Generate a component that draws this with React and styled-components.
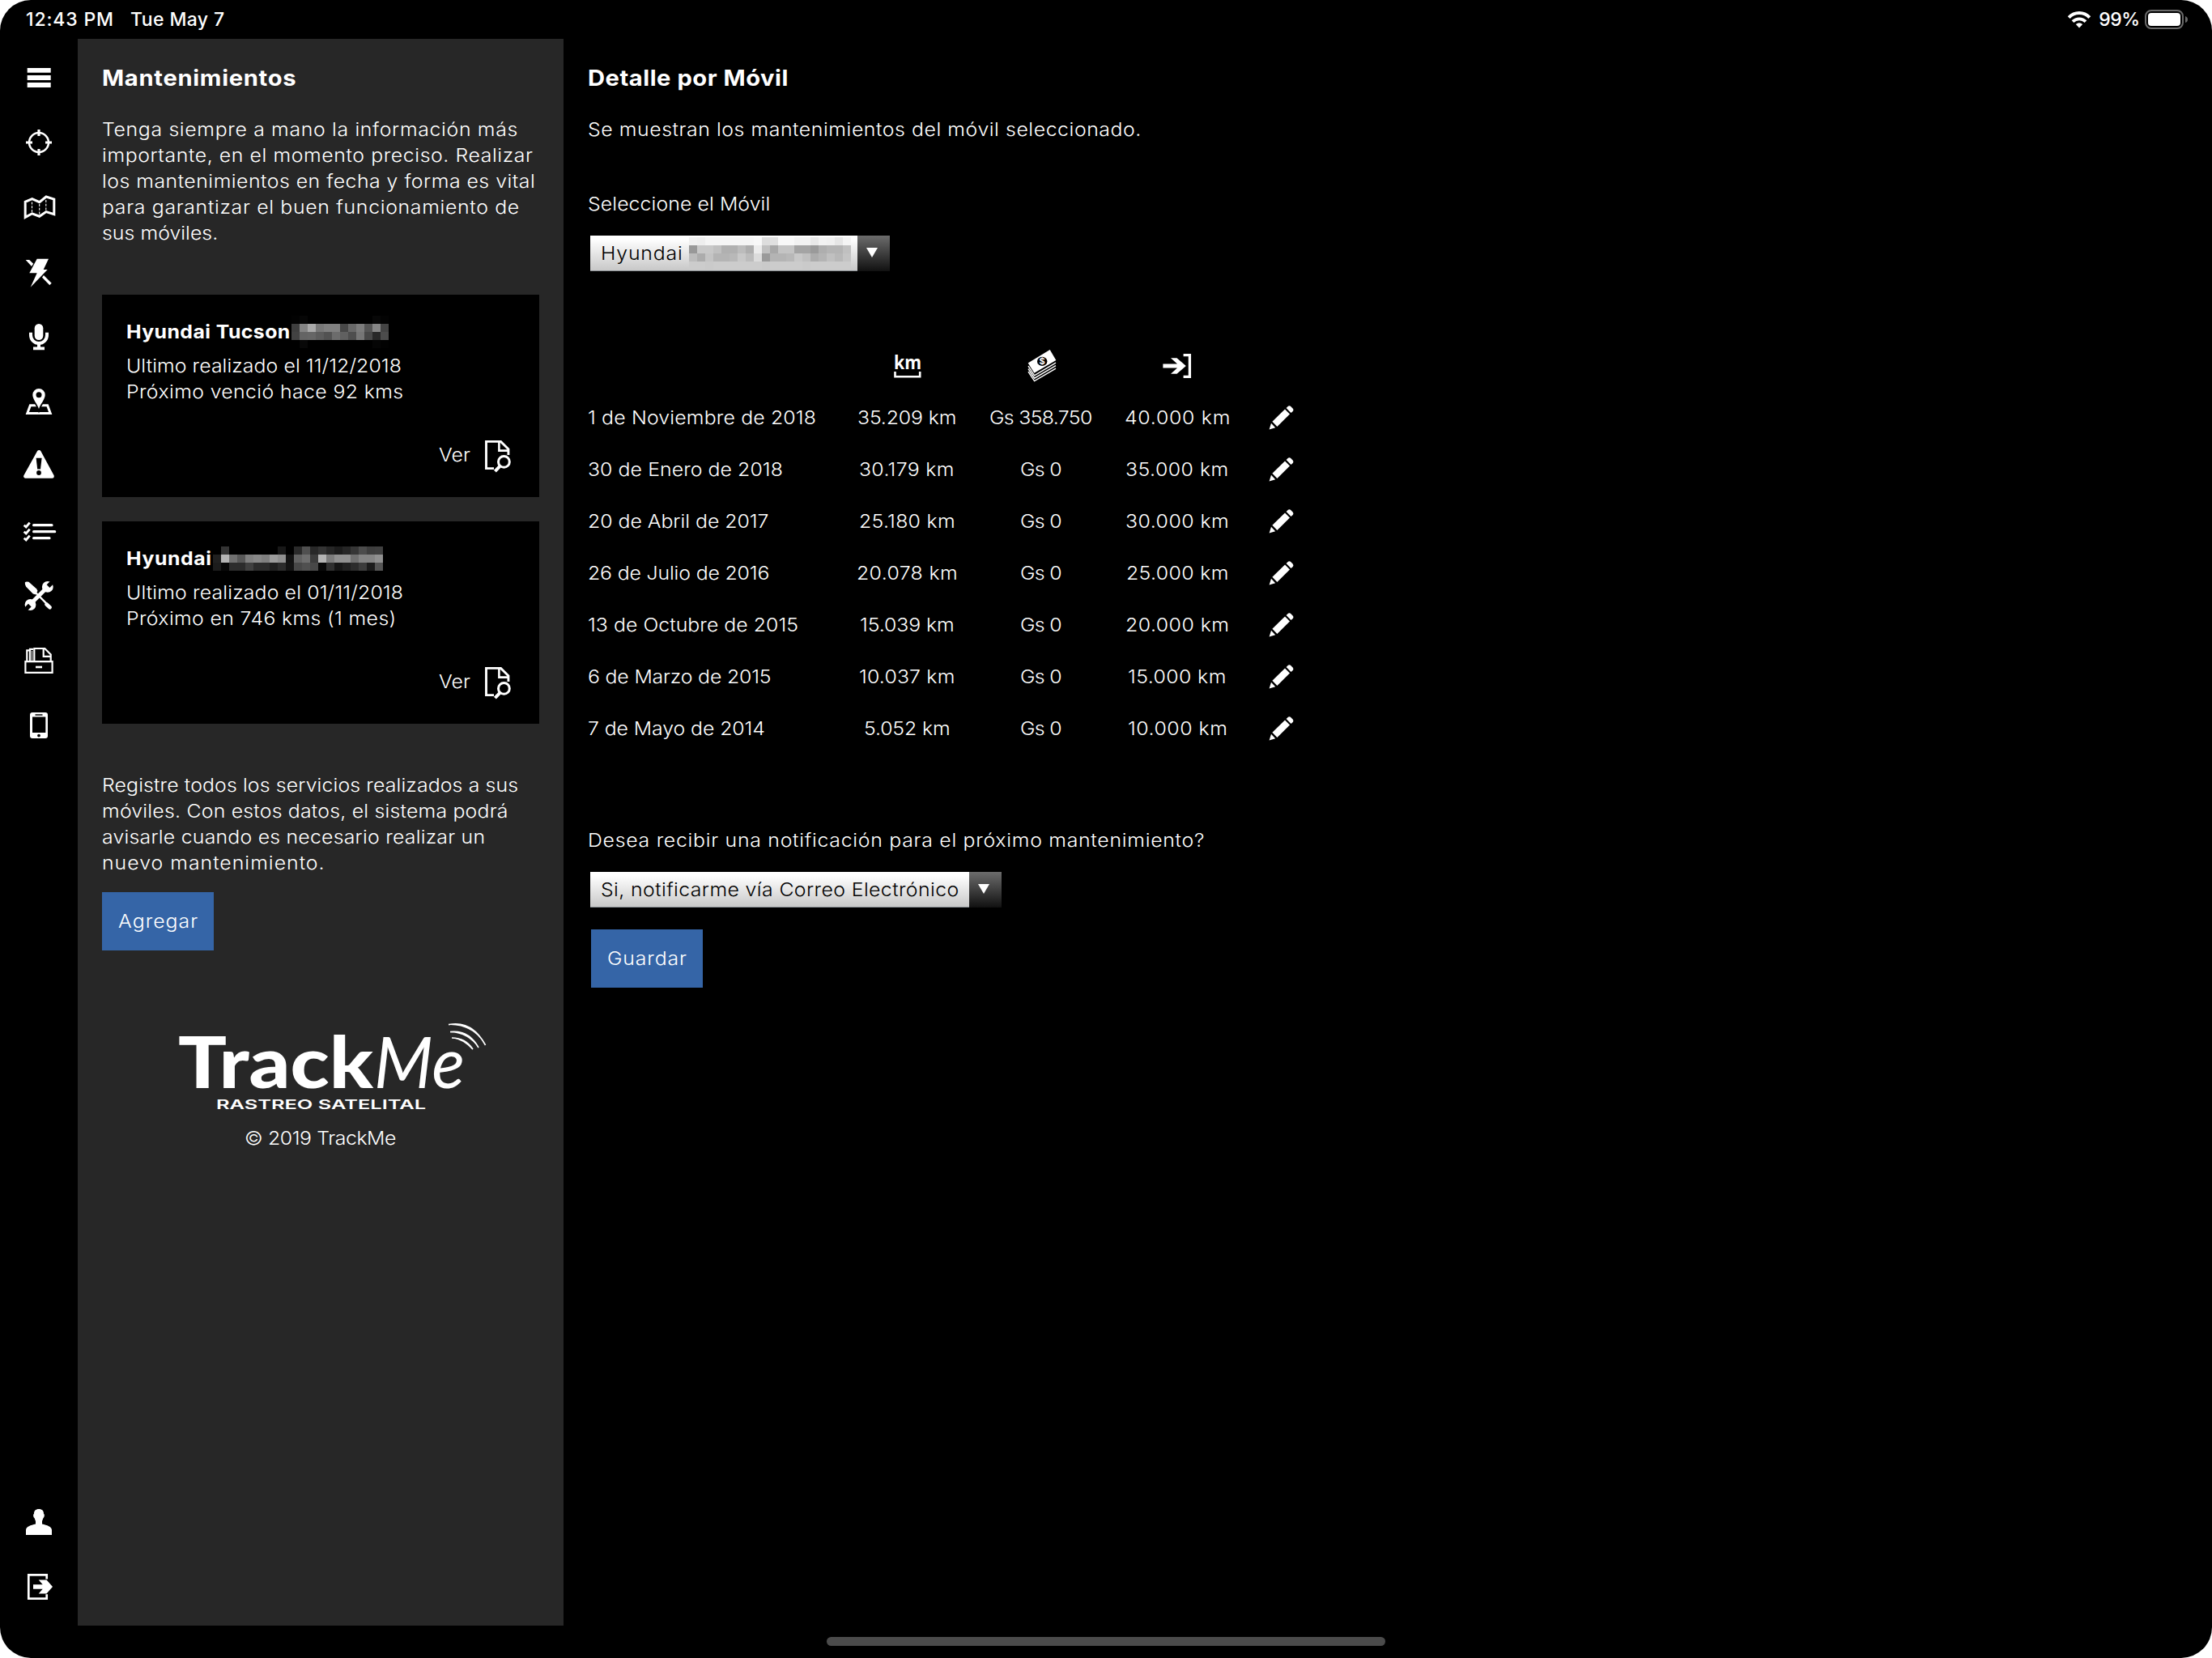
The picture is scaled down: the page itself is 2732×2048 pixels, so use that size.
import React, { useLayoutEffect, useRef, useState } from "react";
import styled, { createGlobalStyle } from "styled-components";

const STRETCH = 1.08;

const services = [
  { date: "1 de Noviembre de 2018", km: "35.209 km", cost: "Gs 358.750", next: "40.000 km", w: [281, 121, 126, 129] },
  { date: "30 de Enero de 2018", km: "30.179 km", cost: "Gs 0", next: "35.000 km", w: [240, 116, 51, 126] },
  { date: "20 de Abril de 2017", km: "25.180 km", cost: "Gs 0", next: "30.000 km", w: [222, 118, 51, 127] },
  { date: "26 de Julio de 2016", km: "20.078 km", cost: "Gs 0", next: "25.000 km", w: [223, 124, 51, 125] },
  { date: "13 de Octubre de 2015", km: "15.039 km", cost: "Gs 0", next: "20.000 km", w: [259, 116, 51, 127] },
  { date: "6 de Marzo de 2015", km: "10.037 km", cost: "Gs 0", next: "15.000 km", w: [225, 117, 51, 120] },
  { date: "7 de Mayo de 2014", km: "5.052 km", cost: "Gs 0", next: "10.000 km", w: [218, 106, 51, 122] },
];

const intro = [
  ["Tenga siempre a mano la información más", 512],
  ["importante, en el momento preciso. Realizar", 531],
  ["los mantenimientos en fecha y forma es vital", 534],
  ["para garantizar el buen funcionamiento de", 514],
  ["sus móviles.", 142],
];

const registerText = [
  ["Registre todos los servicios realizados a sus", 513],
  ["móviles. Con estos datos, el sistema podrá", 500],
  ["avisarle cuando es necesario realizar un", 472],
  ["nuevo mantenimiento.", 274],
];

// gray level of every cell, as hex pairs
const plateTucson = [
  "020600000000000000000703",
  "3e84a978808048687c558644",
  "4264665c526c604e7648284c",
  "000800000000000000000502",
];

const plateHyundai = [
  "003400000000000018002a502834261c26364c3e40",
  "20b470588088809c9012626e3cb47c909070848490",
  "1c082c2c402c2c202c14485048083016202c3c1c54",
];

const plateSelect = [
  "f0eef5f5f5f5f5f5f8dde0f8f8f2f2e8f2f0e6f4",
  "98c8c8c0b0b0bcaeecc0a8c4c4a4a49aaeb4b4c0",
  "bcacc4b4b4b8c8bcdc9ab4b4b8c8c0acb4c0b8c4",
  "cccccacccccccccccccacccccccccacccccccccc",
];

// Stretches a line of text a little, then tracks it until it has the given width
const Fit = ({ w, stretch = STRETCH, children }) => {
  const ref = useRef(null);
  const [spacing, setSpacing] = useState(0);

  useLayoutEffect(() => {
    const natural = ref.current.offsetWidth;
    setSpacing(((w + 1) / stretch - natural) / (children.length - 1));
  }, []);

  return (
    <FitText
      ref={ref}
      $stretch={stretch}
      style={{ letterSpacing: spacing, marginRight: (w + 1) * (1 - 1 / stretch) - spacing }}
    >
      {children}
    </FitText>
  );
};

const Paragraph = ({ lines }) => (
  <Text>
    {lines.map(([line, w]) => (
      <TextLine key={line}>
        <Fit w={w}>{line}</Fit>
      </TextLine>
    ))}
  </Text>
);

const Mosaic = ({ rows }) => (
  <MosaicGrid $cols={rows[0].length / 2}>
    {rows.map((row, y) =>
      row.match(/../g).map((c, x) => <MosaicCell key={`${y}-${x}`} $color={`#${c}${c}${c}`} />)
    )}
  </MosaicGrid>
);

const VehicleCard = ({ name, nameWidth, plate, lines }) => (
  <Card>
    <CardTitle>
      <Fit w={nameWidth}>{name}</Fit>
      <Mosaic rows={plate} />
    </CardTitle>
    <Paragraph lines={lines} />
    <CardAction>
      <CardActionLabel>
        <Fit w={38}>Ver</Fit>
      </CardActionLabel>
      <ViewIcon />
    </CardAction>
  </Card>
);

const Select = ({ width, children }) => (
  <SelectBox>
    <SelectValue $width={width}>{children}</SelectValue>
    <SelectArrow>
      <svg width="14" height="12" viewBox="0 0 14 12">
        <path d="M0 0h14L7 12z" fill="#fff" />
      </svg>
    </SelectArrow>
  </SelectBox>
);

const NavIcon = ({ children }) => (
  <NavItem>
    <svg width="48" height="48" viewBox="0 0 48 48" fill="#fff">
      {children}
    </svg>
  </NavItem>
);

const ViewIcon = () => (
  <svg width="34" height="40" viewBox="0 0 34 40" fill="none" stroke="#fff">
    <path d="M12 34.6H2.5V1.4H20.5L29.9 10.8V18" strokeWidth="2.9" />
    <path d="M18.4 1.4V12.6H30" strokeWidth="2.6" />
    <circle cx="24.4" cy="26.4" r="6.9" strokeWidth="3" />
    <path d="M19.4 31.8L13.4 38.2" strokeWidth="4" />
  </svg>
);

const PencilIcon = () => (
  <svg width="32" height="30" viewBox="0 0 32 30" fill="#fff">
    <path d="M0.6 29.4L3 21.8L8.2 27.2z" />
    <path d="M4.4 19.8L20 4.4L26 10.6L10.4 26z" />
    <path d="M21.6 2.9L23.6 1Q25.4-0.6 27.2 1L29.6 3.4Q31.2 5.2 29.8 6.9L27.5 9.1z" />
  </svg>
);

const MoneyIcon = () => (
  <svg width="36" height="40" viewBox="-1 0 36 40">
    <path d="M27.7 0L35.3 13L8.4 28.8L0.7 16.4z" fill="#fff" />
    <ellipse cx="18.2" cy="14.4" rx="6.2" ry="5.6" fill="#000" />
    <MoneySign x="18.2" y="18.4">$</MoneySign>
    <g fill="none" stroke="#fff" strokeWidth="1.4">
      <path d="M1 20.2L8.6 31.8L35 16.2" />
      <path d="M1 23.7L8.6 35.2L35 19.7" />
      <path d="M1 27.2L8.6 38.6L35 23.2" />
    </g>
  </svg>
);

const Logo = () => (
  <LogoSvg width="384" height="112" viewBox="0 0 384 112">
    <LogoTrack x="-2" y="82" textLength="241" lengthAdjust="spacingAndGlyphs">Track</LogoTrack>
    <LogoMe x="240" y="82" textLength="112" lengthAdjust="spacingAndGlyphs">Me</LogoMe>
    <LogoTag x="45" y="107.5" textLength="259" lengthAdjust="spacingAndGlyphs">RASTREO SATELITAL</LogoTag>
    <path d="M332 4Q360-3 378 30Q362 3 332 4z" />
    <path d="M334 13Q358 9 369.5 33Q356 14 334 13z" />
    <path d="M336 20Q353 19 362 35Q350 22 336 20z" />
    <g fill="none" stroke="#fff" strokeWidth="1.6">
      <path d="M332 3.6Q361-2 377.6 29" />
      <path d="M334 12.6Q357 10 369 32" />
      <path d="M336 20Q353 20 362 34" />
    </g>
  </LogoSvg>
);

export default function App() {
  return (
    <Screen>
      <GlobalStyle />
      <StatusBar>
        <StatusGroup $gap={21}>
          <Fit w={107} stretch={1}>12:43 PM</Fit>
          <Fit w={115} stretch={1}>Tue May 7</Fit>
        </StatusGroup>
        <StatusGroup $gap={6}>
          <svg width="33" height="22" viewBox="0 0 33 22" fill="none" stroke="#fff" strokeWidth="4">
            <path d="M2.2 8.6A17.5 17.5 0 0 1 27.8 8.6" />
            <path d="M7 13.6A11.4 11.4 0 0 1 23 13.6" strokeWidth="3.8" />
            <path d="M15 21.5L10.8 17A6.5 6.5 0 0 1 19.2 17z" fill="#fff" stroke="none" />
          </svg>
          <Fit w={50} stretch={1}>99%</Fit>
          <svg width="54" height="24" viewBox="0 0 54 24">
            <rect x="1" y="1" width="46" height="22" rx="7" fill="none" stroke="#6a6a6a" strokeWidth="2" />
            <rect x="4" y="4" width="40" height="16" rx="4" fill="#fff" />
            <path d="M50 8Q53 9 53 12Q53 15 50 16z" fill="#6a6a6a" />
          </svg>
        </StatusGroup>
      </StatusBar>

      <Body>
        <Nav>
          <NavGroup>
            <NavIcon>
              <path d="M9.7 12h29v5.8h-29zM9.7 21h29v5.9h-29zM9.7 30h29v5.9h-29z" />
            </NavIcon>
            <NavIcon>
              <circle cx="24" cy="24" r="12" fill="none" stroke="#fff" strokeWidth="2.5" />
              <path d="M22.4 8h3.2v8h-3.2zM22.4 32h3.2v8h-3.2zM8 22.4h8v3.2h-8zM32 22.4h8v3.2h-8z" />
            </NavIcon>
            <NavIcon>
              <g fill="none" stroke="#fff">
                <path
                  d="M7.2 36.4V17.3L15.7 13.7L24.7 17.7L33 11L42.8 14V32.6L33 29.6L24.7 35.2L15.7 31.8z"
                  strokeWidth="3"
                />
                <path d="M15.5 17.5V30M24.7 20V34M32.8 15V28" strokeWidth="1.1" strokeDasharray="3 1.8" />
              </g>
            </NavIcon>
            <NavIcon>
              <path d="M21.7 7.7H36L29.7 21H34.7L13.7 42.7L21.7 25.3H12.3z" />
              <path d="M7.7 9H12.2L17.2 13.8L15 16.9zM30 28L39.7 37.7L37.3 40.2L28 30.7z" />
            </NavIcon>
            <NavIcon>
              <rect x="18.7" y="8" width="10.6" height="20" rx="5.3" />
              <path d="M14 18.7V22a10 10 0 0 0 20 0V18.7" fill="none" stroke="#fff" strokeWidth="4" />
              <path d="M22 33h4v3.5h5v3.7H17v-3.7h5z" />
            </NavIcon>
            <NavIcon>
              <path d="M13.4 28.7H34.6L38.2 38.5H9.8z" fill="none" stroke="#fff" strokeWidth="3" />
              <path
                d="M24 33C22 27 16.3 21 16.3 15.7a7.7 7.7 0 0 1 15.4 0C31.7 21 26 27 24 33z"
                stroke="#000"
                strokeWidth="3.5"
                paintOrder="stroke"
              />
              <circle cx="24" cy="15.7" r="3.5" fill="#000" />
            </NavIcon>
            <NavIcon>
              <path d="M24.2 6.5L7.7 36.2H40.3z" stroke="#fff" strokeWidth="5" strokeLinejoin="round" />
              <path d="M20.6 13.7h7L26 27.6h-3.8z" fill="#000" />
              <circle cx="24" cy="32" r="2.9" fill="#000" />
            </NavIcon>
            <NavIcon>
              <g fill="none" stroke="#fff" strokeLinecap="round">
                <path d="M17.6 16.7H40M17.6 24.7H43.7M17.6 32.7H37" strokeWidth="3.2" />
                <path
                  d="M5.7 16.7L8.2 19L12.7 13.6M5.7 24.7L8.2 27L12.7 21.6M5.7 32.7L8.2 35L12.7 29.6"
                  strokeWidth="2.9"
                  strokeLinecap="butt"
                />
              </g>
            </NavIcon>
            <NavIcon>
              <path d="M14.5 33.2L33 14.7" stroke="#fff" strokeWidth="5" />
              <circle cx="34.8" cy="12.9" r="6.9" />
              <circle cx="13.5" cy="35" r="6.9" />
              <path d="M35.5 12.2L43 4.7M12.8 35.7L5 43.5" stroke="#000" strokeWidth="5.2" />
              <path d="M6.8 7.5Q8 5.7 11.5 6.8L21 15.2L22.5 17.8L20.2 22.4L16.8 21.6L8.2 12.7Q6.5 10 6.8 7.5z" />
              <path d="M19 19L36 36.2" stroke="#fff" strokeWidth="2.4" />
              <path d="M33.5 34.5L37.6 38.2" stroke="#fff" strokeWidth="4.6" strokeLinecap="round" />
            </NavIcon>
            <NavIcon>
              <g fill="none" stroke="#fff" strokeWidth="2.2">
                <path d="M7.4 25.1H40.6V38.9H7.4z" />
                <path d="M20 32H28" strokeWidth="2.6" />
                <path d="M9.3 24V11.3H12.8M13 24V9.9H17M18.3 24V9H31.3L38.7 16.4V24" />
                <path d="M29.7 9V18.8H38.5" />
                <path d="M15.6 12V24" strokeWidth="1" />
              </g>
            </NavIcon>
            <NavIcon>
              <rect x="13" y="8" width="22" height="32" rx="3" />
              <path d="M16 13.4h16.3v19.6H16zM19.5 10.2h9v1.6h-9z" fill="#000" />
              <circle cx="24" cy="36.6" r="1.9" fill="#000" />
            </NavIcon>
          </NavGroup>
          <NavGroup>
            <NavIcon>
              <path d="M24 8C28 8 30.2 10.2 30 14C31.5 14.5 30.8 18.5 29.5 19C29 21 28 22 28 23.5V26.5C34 28 40 29.5 40 34V40H8V34C8 29.5 14 28 20 26.5V23.5C20 22 19 21 18.5 19C17.2 18.5 16.5 14.5 18 14C17.8 10.2 20 8 24 8z" />
            </NavIcon>
            <NavIcon>
              <path d="M33.7 14.5V9.3H11.3V38.7H33.7V33.3" fill="none" stroke="#fff" strokeWidth="2.7" />
              <path d="M17 21.2H28.7L23.7 15.6H33.5L41 24L33.5 32.4H23.7L28.7 26.8H17z" />
            </NavIcon>
          </NavGroup>
        </Nav>

        <Panel>
          <Heading>
            <Fit w={239}>Mantenimientos</Fit>
          </Heading>
          <Paragraph lines={intro} />
          <Cards>
            <VehicleCard
              name="Hyundai Tucson"
              nameWidth={201}
              plate={plateTucson}
              lines={[
                ["Ultimo realizado el 11/12/2018", 339],
                ["Próximo venció hace 92 kms", 341],
              ]}
            />
            <VehicleCard
              name="Hyundai"
              nameWidth={104}
              plate={plateHyundai}
              lines={[
                ["Ultimo realizado el 01/11/2018", 341],
                ["Próximo en 746 kms (1 mes)", 332],
              ]}
            />
          </Cards>
          <Paragraph lines={registerText} />
          <AddButton>
            <Fit w={97}>Agregar</Fit>
          </AddButton>
          <Logo />
          <Copyright>
            <Fit w={186}>© 2019 TrackMe</Fit>
          </Copyright>
        </Panel>

        <Main>
          <Heading>
            <Fit w={246}>Detalle por Móvil</Fit>
          </Heading>
          <Paragraph lines={[["Se muestran los mantenimientos del móvil seleccionado.", 682]]} />
          <Field $top={60}>
            <Paragraph lines={[["Seleccione el Móvil", 224]]} />
            <Select width={330}>
              <Fit w={100}>Hyundai</Fit>
              <Mosaic rows={plateSelect} />
            </Select>
          </Field>

          <Table>
            <Row>
              <Cell />
              <Cell>
                <svg width="34" height="30" viewBox="-1 0 34 30">
                  <KmText x="0" y="18.5" textLength="34" lengthAdjust="spacingAndGlyphs">km</KmText>
                  <path d="M1.5 22V28.2H32.2V22" fill="none" stroke="#fff" strokeWidth="2.6" />
                </svg>
              </Cell>
              <Cell>
                <MoneyIcon />
              </Cell>
              <Cell>
                <svg width="36" height="30" viewBox="0 0 36 30" fill="#fff">
                  <path d="M0.4 12.5H18L10 5.3H17.5L28.8 15L17.5 24.7H10L18 17.5H0.4z" />
                  <path d="M25.6 1.7H33.4V28.3H25.6" fill="none" stroke="#fff" strokeWidth="3.3" />
                </svg>
              </Cell>
              <Cell />
            </Row>
            {services.map((s) => (
              <Row key={s.date}>
                <Cell $left><Fit w={s.w[0]}>{s.date}</Fit></Cell>
                <Cell><Fit w={s.w[1]}>{s.km}</Fit></Cell>
                <Cell><Fit w={s.w[2]}>{s.cost}</Fit></Cell>
                <Cell><Fit w={s.w[3]}>{s.next}</Fit></Cell>
                <Cell><PencilIcon /></Cell>
              </Row>
            ))}
          </Table>

          <Field $top={90}>
            <Paragraph lines={[["Desea recibir una notificación para el próximo mantenimiento?", 760]]} />
            <Select width={468}>
              <Fit w={441}>Si, notificarme vía Correo Electrónico</Fit>
            </Select>
          </Field>
          <SaveButton>
            <Fit w={97}>Guardar</Fit>
          </SaveButton>
        </Main>
      </Body>
      <HomeIndicator />
    </Screen>
  );
}

const GlobalStyle = createGlobalStyle`
  * {
    box-sizing: border-box;
  }

  body {
    margin: 0;
    background: #fff;
  }

  svg {
    display: block;
    flex-shrink: 0;
    overflow: visible;
  }
`;

const Screen = styled.div`
  width: 2732px;
  height: 2048px;
  display: flex;
  flex-direction: column;
  overflow: hidden;
  border-radius: 38px;
  background: #000;
  color: #fff;
  font-family: "Inter", "Liberation Sans", sans-serif;
  font-size: 23px;
  font-weight: 350;
  line-height: 32px;
`;

const StatusBar = styled.div`
  display: flex;
  justify-content: space-between;
  height: 48px;
  padding: 0 29px 0 32px;
  font-weight: 450;
`;

const StatusGroup = styled.div`
  display: flex;
  align-items: center;
  gap: ${(props) => props.$gap}px;
`;

const Body = styled.div`
  display: flex;
  height: 1960px;
`;

const Nav = styled.div`
  width: 96px;
  display: flex;
  flex-direction: column;
  justify-content: space-between;
  padding: 8px 0;
`;

const NavGroup = styled.div`
  display: flex;
  flex-direction: column;
`;

const NavItem = styled.div`
  height: 80px;
  display: flex;
  align-items: center;
  justify-content: center;
`;

const Panel = styled.div`
  width: 600px;
  padding: 32px 30px;
  background: #272727;
`;

const Main = styled.div`
  flex: 1;
  padding: 32px 30px;
`;

const Heading = styled.div`
  margin-bottom: 30px;
  font-size: 27px;
  font-weight: 700;
  line-height: 34px;
`;

const Text = styled.div`
  font-weight: 350;
`;

const TextLine = styled.div`
  height: 32px;
  white-space: nowrap;
`;

const FitText = styled.span`
  display: inline-block;
  white-space: pre;
  transform: scaleX(${(props) => props.$stretch});
  transform-origin: left;
`;

const Cards = styled.div`
  display: flex;
  flex-direction: column;
  gap: 30px;
  margin: 60px 0;
`;

const Card = styled.div`
  height: 250px;
  padding: 30px 34px 30px 30px;
  background: #000;
`;

const CardTitle = styled.div`
  display: flex;
  align-items: center;
  gap: 2px;
  height: 32px;
  margin-bottom: 10px;
  font-weight: 700;
`;

const CardAction = styled.div`
  display: flex;
  justify-content: flex-end;
  gap: 17px;
  margin-top: 44px;
`;

const CardActionLabel = styled.div`
  padding-top: 2px;
`;

const MosaicGrid = styled.div`
  display: grid;
  grid-template-columns: repeat(${(props) => props.$cols}, 10px);
  grid-auto-rows: 10px;
`;

const MosaicCell = styled.div`
  background: ${(props) => props.$color};
`;

const Button = styled.div`
  width: 138px;
  height: 72px;
  display: flex;
  align-items: center;
  justify-content: center;
  background: #3565a7;
`;

const AddButton = styled(Button)`
  margin-top: 20px;
`;

const SaveButton = styled(Button)`
  margin: 27px 0 0 4px;
`;

const LogoSvg = styled.svg`
  margin: 88px 0 0 96px;
  fill: #fff;
`;

const LogoTrack = styled.text`
  font-family: "Lato", sans-serif;
  font-size: 88px;
  font-weight: 900;
`;

const LogoMe = styled.text`
  font-family: "Lato", sans-serif;
  font-size: 88px;
  font-style: italic;
  font-weight: 400;
`;

const LogoTag = styled.text`
  font-family: "Inter", sans-serif;
  font-size: 16.5px;
  font-weight: 600;
`;

const MoneySign = styled.text`
  fill: #fff;
  font-family: "Inter", sans-serif;
  font-size: 11px;
  font-weight: 700;
  text-anchor: middle;
`;

const KmText = styled.text`
  fill: #fff;
  font-family: "Open Sans", sans-serif;
  font-size: 24px;
  font-weight: 700;
`;

const Copyright = styled.div`
  margin-top: 16px;
  text-align: center;
`;

const Field = styled.div`
  margin-top: ${(props) => props.$top}px;
`;

const SelectBox = styled.div`
  display: flex;
  height: 44px;
  margin: 23px 0 0 3px;
`;

const SelectValue = styled.div`
  width: ${(props) => props.$width}px;
  display: flex;
  align-items: center;
  gap: 8px;
  padding-left: 13px;
  border-bottom: 1px solid #8a8f94;
  background: linear-gradient(#fff 10%, #c8c8c8);
  color: #000;
`;

const SelectArrow = styled.div`
  width: 40px;
  display: flex;
  justify-content: center;
  padding: 15px 4px 0 0;
  background: linear-gradient(#6c6c6c, #111);
`;

const Table = styled.div`
  margin-top: 85px;
`;

const Row = styled.div`
  display: grid;
  grid-template-columns: 311px 166px 166px 170px 88px;
  height: 64px;
`;

const Cell = styled.div`
  display: flex;
  align-items: center;
  justify-content: ${(props) => (props.$left ? "flex-start" : "center")};
`;

const HomeIndicator = styled.div`
  width: 690px;
  height: 11px;
  margin: 14px auto 0;
  border-radius: 6px;
  background: #4b4b4b;
`;
